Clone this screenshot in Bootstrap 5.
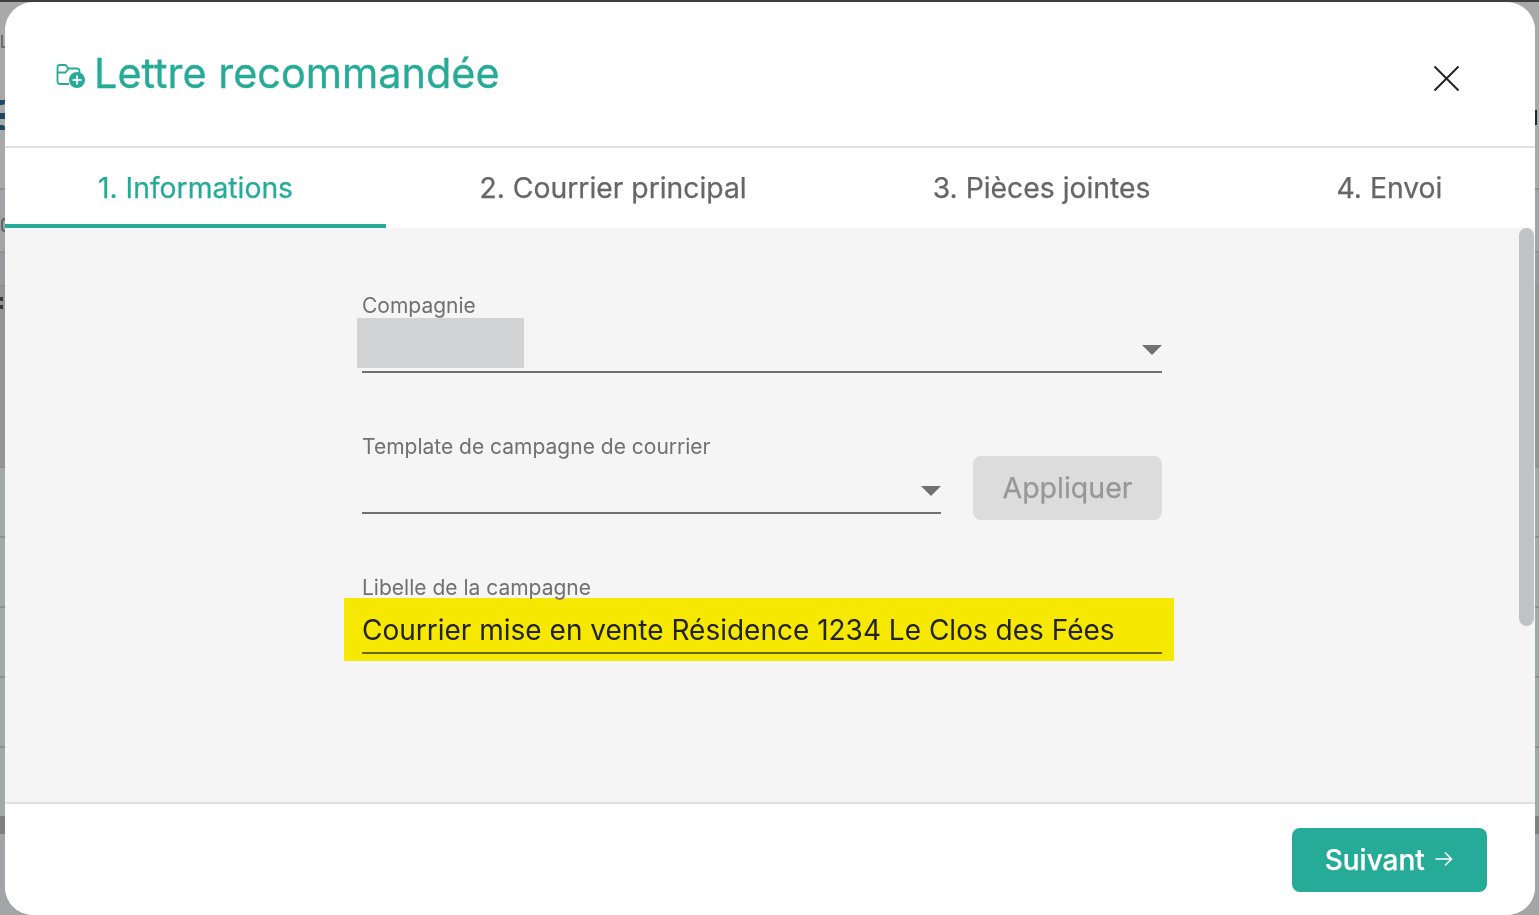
<!DOCTYPE html>
<html lang="fr">
<head>
  <meta charset="UTF-8" />
  <meta name="viewport" content="width=device-width, initial-scale=1.0"/>
  <title>Lettre recommandée</title>
  <link href="https://cdn.jsdelivr.net/npm/bootstrap@5.3.3/dist/css/bootstrap.min.css" rel="stylesheet" />
  <style>
    html, body { height: 100%; overflow: hidden; }
    body { background: #a5a6a7; font-family: "Inter", "Liberation Sans", sans-serif; }

    /* page grisee derriere la modale */
    .fond { height: 915px; }
    .fond > div { border-bottom: 2px solid #8f9191; }
    .f-haut { height: 2px; background: #3f3f3f; border: 0 !important; }
    .f-a { height: 188px; background: #a9a9a9; }
    .f-b { height: 63px; background: #a3a4a5; }
    .f-c { height: 34px; background: #999a9b; }
    .f-d { height: 181px; background: #959595; }
    .f-e { height: 70px; background: #a0aaa7; }
    .f-g { height: 68px; background: #a0aaa7; border: 0 !important; }
    .f-h { height: 18px; background: #7f8080; border: 0 !important; }
    .f-i { height: 82px; background: #a4a5a7; border: 0 !important; }
    .bout { position: absolute; display: block; }
    .bout-u { left: 1px; top: 35px; width: 4px; height: 13px; border: 2px solid #6a6e70; border-top: 0; border-right: 0; }
    .bout-s { left: 0; top: 100px; width: 5px; height: 5px; background: #1d4a5e; border-radius: 0 0 3px 0; }
    .bout-s2 { left: 0; top: 113px; width: 5px; height: 6px; background: #1d4a5e; }
    .bout-s3 { left: 0; top: 125px; width: 5px; height: 5px; background: #1d4a5e; border-radius: 0 3px 0 0; }
    .bout-c { left: 1px; top: 218px; width: 4px; height: 14px; border: 2px solid #5f6668; border-right: 0; border-radius: 4px 0 0 4px; }
    .bout-p { left: 0; top: 297px; width: 3px; height: 4px; background: #3a3a3a; }
    .bout-p2 { left: 0; top: 305px; width: 3px; height: 4px; background: #3a3a3a; }
    .bout-d { left: 1535px; top: 110px; width: 2px; height: 15px; background: #1a2a38; }

    .dialogue {
      position: fixed; top: 2px; left: 5px; width: 1530px; height: 913px;
      background: #fff; border-radius: 28px; overflow: hidden;
      display: flex; flex-direction: column;
    }
    .dlg-entete { height: 144px; flex: none; padding: 47px 0 0 51px; position: relative; }
    .dlg-titre { font-size: 41.4px; line-height: 48px; font-weight: 400; color: #25ab98; margin: 0; -webkit-text-stroke: .3px #25ab98; }
    .dlg-titre svg { width: 30px; height: 26px; margin-right: 8px; vertical-align: -1px; }
    .dlg-fermer { position: absolute; top: 63px; left: 1428px; width: 27px; height: 27px; padding: 0; border: 0; background: none; display: block; }
    .dlg-fermer svg { display: block; }

    .onglets { flex: none; height: 82px; border-top: 2px solid #e0e0e0; flex-wrap: nowrap; }
    .onglet { padding: 0 93px; height: 80px; font-size: 28.3px; line-height: 80px; color: #666; white-space: nowrap; -webkit-text-stroke: .25px currentColor; }
    .onglet.actif { color: #25ab98; border-bottom: 4px solid #25ab98; padding-right: 93.4px; }

    .dlg-corps { flex: 1; background: #f5f5f5; position: relative; overflow: hidden; }
    .barre-defil { position: absolute; top: 0; right: 1px; width: 15px; height: 398px; background: #c1c2c3; border-radius: 8px; }
    .formulaire { width: 800px; margin-left: 357px; padding-top: 64px; }

    .champ-titre { font-size: 21px; line-height: 28px; color: #707070; margin: 0; display: block; }
    .champ-ligne { height: 53px; border-bottom: 2px solid #707070; position: relative; }
    .champ-fleche { position: absolute; right: 0; bottom: 16px; width: 0; height: 0; border-left: 10px solid transparent; border-right: 10px solid transparent; border-top: 10px solid #707070; }
    .masque { position: absolute; left: -5px; top: -2px; width: 167px; height: 50px; background: #d2d3d5; }

    .bloc-template { margin-top: 60px; gap: 32px; }
    .btn.btn-appliquer:disabled { width: 189px; height: 64px; flex: none; background: #dcdcdc; color: #979797; border: 0; border-radius: 8px; font-size: 28.5px; padding: 0; margin-bottom: -6px; opacity: 1; -webkit-text-stroke: .25px #979797; }
    .bloc-libelle { margin-top: 60px; position: relative; }
    .surligne { position: absolute; left: -18px; right: -12px; top: 24px; height: 63px; background: #f6e800; }
    .bloc-libelle .champ-titre, .libelle-ligne { position: relative; }
    .libelle-ligne { height: 52px; border-bottom: 2px solid #6b6800; font-size: 28px; line-height: 56px; color: #222; white-space: nowrap; }

    .dlg-pied { height: 113px; flex: none; background: #fff; border-top: 2px solid #e0e0e0; padding: 24px 48px 0 0; display: flex; justify-content: flex-end; align-items: flex-start; }
    .btn-suivant { width: 195px; height: 64px; background: #25ab98; color: #fff; border: 0; border-radius: 8px; font-size: 28px; font-weight: 500; padding: 0; -webkit-text-stroke: .25px #fff; }
    .btn-suivant:hover { background: #25ab98; color: #fff; }
    .btn-suivant svg { width: 20px; height: 20px; vertical-align: 1px; margin-left: 2px; }
  </style>
</head>
<body>
  <!-- Fond de page -->
  <div class="fond" aria-hidden="true">
    <div class="f-haut"></div>
    <div class="f-a"></div>
    <div class="f-b"></div>
    <div class="f-c"></div>
    <div class="f-d"></div>
    <div class="f-e"></div>
    <div class="f-e"></div>
    <div class="f-e"></div>
    <div class="f-e"></div>
    <div class="f-g"></div>
    <div class="f-h"></div>
    <div class="f-i"></div>
    <span class="bout bout-u"></span>
    <span class="bout bout-s"></span>
    <span class="bout bout-s2"></span>
    <span class="bout bout-s3"></span>
    <span class="bout bout-c"></span>
    <span class="bout bout-p"></span>
    <span class="bout bout-p2"></span>
    <span class="bout bout-d"></span>
  </div>

  <!-- Modale -->
  <div class="dialogue" role="dialog">
    <div class="dlg-entete">
      <h1 class="dlg-titre">
        <svg viewBox="0 0 30 26" fill="none" stroke="#25ab98" stroke-width="1.8">
          <path d="M13 21H4a2.5 2.5 0 0 1-2.5-2.5v-14A2.5 2.5 0 0 1 4 2h5.5l3 3.5H21a2.5 2.5 0 0 1 2.5 2.5v2"/>
          <path d="M1.5 9.5h8l3-4"/>
          <circle cx="21" cy="17" r="8" fill="#25ab98" stroke="none"/>
          <path d="M21 12.5v9M16.5 17h9" stroke="#fff"/>
        </svg>Lettre recommandée
      </h1>
      <button type="button" class="dlg-fermer" aria-label="Fermer">
        <svg width="27" height="27" viewBox="0 0 27 27" stroke="#222" stroke-width="2" fill="none"><path d="M1.5 1.5l24 24M25.5 1.5l-24 24"/></svg>
      </button>
    </div>

    <div class="onglets d-flex">
      <div class="onglet actif">1. Informations</div>
      <div class="onglet">2. Courrier principal</div>
      <div class="onglet">3. Pièces jointes</div>
      <div class="onglet">4. Envoi</div>
    </div>

    <div class="dlg-corps">
      <div class="formulaire">
        <div>
          <label class="champ-titre">Compagnie</label>
          <div class="champ-ligne">
            <div class="masque"></div>
            <span class="champ-fleche"></span>
          </div>
        </div>

        <div class="bloc-template d-flex align-items-end">
          <div class="flex-grow-1">
            <label class="champ-titre">Template de campagne de courrier</label>
            <div class="champ-ligne"><span class="champ-fleche"></span></div>
          </div>
          <button type="button" class="btn btn-appliquer" disabled>Appliquer</button>
        </div>

        <div class="bloc-libelle">
          <div class="surligne"></div>
          <label class="champ-titre">Libelle de la campagne</label>
          <div class="libelle-ligne">Courrier mise en vente Résidence 1234 Le Clos des Fées</div>
        </div>
      </div>
      <div class="barre-defil"></div>
    </div>

    <div class="dlg-pied">
      <button type="button" class="btn btn-suivant">Suivant
        <svg viewBox="0 0 20 20" fill="none" stroke="#fff" stroke-width="1.6"><path d="M1.5 10h16M11 3.5l6.5 6.5-6.5 6.5"/></svg>
      </button>
    </div>
  </div>

  <script src="https://cdn.jsdelivr.net/npm/bootstrap@5.3.3/dist/js/bootstrap.bundle.min.js"></script>
</body>
</html>
